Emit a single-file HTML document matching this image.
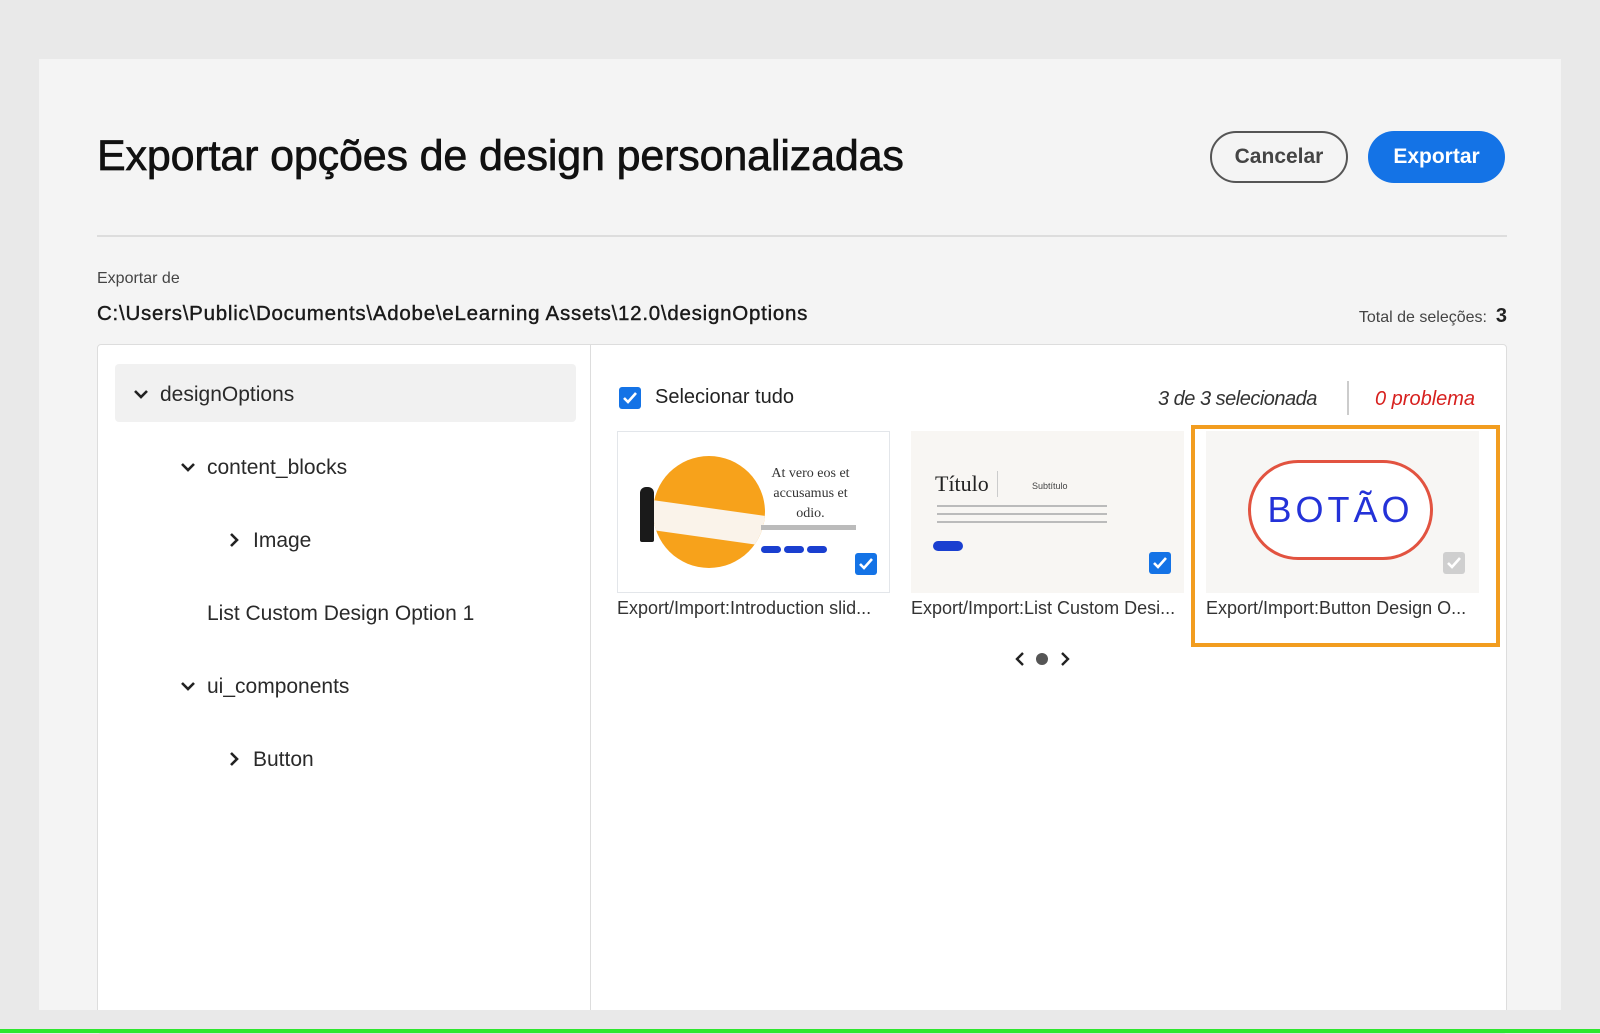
<!DOCTYPE html>
<html><head><meta charset="utf-8"><style>
*{margin:0;padding:0;box-sizing:border-box}
body{width:1600px;height:1033px;background:#e9e9e9;font-family:"Liberation Sans",sans-serif;position:relative;overflow:hidden;color:#222}
.abs{position:absolute}
#dlg{left:39px;top:59px;width:1522px;height:951px;background:#f4f4f4}
.green{left:0;top:1029px;width:1600px;height:4px;background:#2ee62e}
.btn{height:52px;border-radius:26px;font-size:21px;font-weight:bold;display:flex;align-items:center;justify-content:center}
.tree{font-size:21px;color:#2a2a2a}
.lbl{font-size:18px;color:#333;white-space:nowrap}
.cb{width:22px;height:22px;border-radius:3px;background:#1473e6}
.cb svg{display:block}
</style></head><body>
<div id="dlg" class="abs"></div>
<div class="abs" style="left:97px;top:132px;font-size:43px;letter-spacing:-0.15px;color:#111;-webkit-text-stroke:0.7px #111">Exportar opções de design personalizadas</div>
<div class="abs btn" style="left:1210px;top:131px;width:138px;border:2.5px solid #555;color:#444">Cancelar</div>
<div class="abs btn" style="left:1368px;top:131px;width:137px;background:#1473e6;color:#fff">Exportar</div>
<div class="abs" style="left:97px;top:235px;width:1410px;height:2px;background:#ddd"></div>
<div class="abs" style="left:97px;top:270px;font-size:16px;color:#444">Exportar de</div>
<div class="abs" style="left:97px;top:302px;font-size:20.5px;color:#1a1a1a;letter-spacing:0.75px;-webkit-text-stroke:0.4px #1a1a1a">C:\Users\Public\Documents\Adobe\eLearning Assets\12.0\designOptions</div>
<div class="abs" style="left:1340px;top:305px;font-size:16px;color:#444;width:167px;text-align:right">Total de seleções:&nbsp; <b style="font-size:20px;color:#222">3</b></div>
<div class="abs" style="left:97px;top:344px;width:1410px;height:690px;background:#fff;border:1px solid #ddd;border-radius:4px"></div>
<div class="abs" style="left:590px;top:344px;width:1px;height:690px;background:#ddd"></div>
<div class="abs" style="left:115px;top:364px;width:461px;height:58px;background:#f1f1f1;border-radius:4px"></div>
<svg class="abs" style="left:133px;top:388px" width="16" height="12"><path d="M2 3l6 6 6-6" stroke="#222" stroke-width="2.6" fill="none"/></svg>
<div class="abs tree" style="left:160px;top:383px">designOptions</div>
<svg class="abs" style="left:180px;top:461px" width="16" height="12"><path d="M2 3l6 6 6-6" stroke="#222" stroke-width="2.6" fill="none"/></svg>
<div class="abs tree" style="left:207px;top:456px">content_blocks</div>
<svg class="abs" style="left:228px;top:532px" width="12" height="16"><path d="M3 2l6 6-6 6" stroke="#222" stroke-width="2.6" fill="none"/></svg>
<div class="abs tree" style="left:253px;top:529px">Image</div>
<div class="abs tree" style="left:207px;top:602px">List Custom Design Option 1</div>
<svg class="abs" style="left:180px;top:680px" width="16" height="12"><path d="M2 3l6 6 6-6" stroke="#222" stroke-width="2.6" fill="none"/></svg>
<div class="abs tree" style="left:207px;top:675px">ui_components</div>
<svg class="abs" style="left:228px;top:751px" width="12" height="16"><path d="M3 2l6 6-6 6" stroke="#222" stroke-width="2.6" fill="none"/></svg>
<div class="abs tree" style="left:253px;top:748px">Button</div>

<div class="abs cb" style="left:619px;top:387px"><svg width="22" height="22"><path d="M5 11l4 4 8-9" stroke="#fff" stroke-width="2.6" fill="none"/></svg></div>
<div class="abs" style="left:655px;top:386px;font-size:20px;color:#222">Selecionar tudo</div>
<div class="abs" style="left:1158px;top:388px;font-size:20px;font-style:italic;color:#333;letter-spacing:-0.5px">3 de 3 selecionada</div>
<div class="abs" style="left:1347px;top:381px;width:2px;height:34px;background:#ccc"></div>
<div class="abs" style="left:1375px;top:388px;font-size:20px;font-style:italic;color:#d7201e">0 problema</div>

<div class="abs" style="left:617px;top:431px;width:273px;height:162px;background:#fff;border:1px solid #e3e6ea;overflow:hidden">
 <div class="abs" style="left:35px;top:24px;width:112px;height:112px;border-radius:50%;background:#f7a21b;overflow:hidden">
  <div class="abs" style="left:0;top:52px;width:112px;height:30px;background:#faf3ea;transform:skewY(8deg)"></div>
 </div>
 <div class="abs" style="left:22px;top:55px;width:14px;height:55px;background:#1a1a1a;border-radius:6px 6px 2px 2px"></div>
 <div class="abs" style="left:145px;top:32px;width:95px;font-family:'Liberation Serif',serif;font-size:14px;line-height:20px;text-align:center;color:#333">At vero eos et accusamus et odio.</div>
 <div class="abs" style="left:143px;top:93px;width:95px;height:5px;background:#bbb"></div>
 <div class="abs" style="left:143px;top:114px;width:20px;height:7px;border-radius:4px;background:#1a3fd0"></div>
 <div class="abs" style="left:166px;top:114px;width:20px;height:7px;border-radius:4px;background:#1a3fd0"></div>
 <div class="abs" style="left:189px;top:114px;width:20px;height:7px;border-radius:4px;background:#1a3fd0"></div>
 <div class="abs cb" style="left:237px;top:121px"><svg width="22" height="22"><path d="M5 11l4 4 8-9" stroke="#fff" stroke-width="2.6" fill="none"/></svg></div>
</div>
<div class="abs" style="left:911px;top:431px;width:273px;height:162px;background:#f8f6f3;overflow:hidden">
 <div class="abs" style="left:24px;top:40px;font-family:'Liberation Serif',serif;font-size:22px;color:#222">Título</div>
 <div class="abs" style="left:86px;top:40px;width:1px;height:26px;background:#ccc"></div>
 <div class="abs" style="left:121px;top:50px;font-size:9px;color:#444">Subtítulo</div>
 <div class="abs" style="left:26px;top:74px;width:170px;height:2px;background:#bbb"></div>
 <div class="abs" style="left:26px;top:82px;width:170px;height:2px;background:#bbb"></div>
 <div class="abs" style="left:26px;top:90px;width:170px;height:2px;background:#bbb"></div>
 <div class="abs" style="left:22px;top:110px;width:30px;height:10px;border-radius:5px;background:#1a3fd0"></div>
 <div class="abs cb" style="left:238px;top:121px"><svg width="22" height="22"><path d="M5 11l4 4 8-9" stroke="#fff" stroke-width="2.6" fill="none"/></svg></div>
</div>
<div class="abs" style="left:1191px;top:425px;width:309px;height:222px;border:4px solid #f29d1f"></div>
<div class="abs" style="left:1206px;top:431px;width:273px;height:162px;background:#f7f6f4;overflow:hidden">
 <div class="abs" style="left:42px;top:29px;width:185px;height:100px;border-radius:50px;background:#fff;border:3px solid #e25340;display:flex;align-items:center;justify-content:center;font-size:36px;letter-spacing:4px;color:#2432d8">BOTÃO</div>
 <div class="abs" style="left:237px;top:121px;width:22px;height:22px;border-radius:3px;background:#cfcfcf"><svg width="22" height="22"><path d="M5 11l4 4 8-9" stroke="#fff" stroke-width="2.6" fill="none"/></svg></div>
</div>
<div class="abs lbl" style="left:617px;top:598px">Export/Import:Introduction slid...</div>
<div class="abs lbl" style="left:911px;top:598px">Export/Import:List Custom Desi...</div>
<div class="abs lbl" style="left:1206px;top:598px">Export/Import:Button Design O...</div>
<svg class="abs" style="left:1011px;top:650px" width="64" height="18"><path d="M12 3l-6 6 6 6" stroke="#222" stroke-width="2.4" fill="none"/><circle cx="31" cy="9" r="6" fill="#555"/><path d="M51 3l6 6-6 6" stroke="#222" stroke-width="2.4" fill="none"/></svg>
<div class="abs" style="left:0;top:1010px;width:1600px;height:19px;background:#e9e9e9"></div>
<div class="abs green"></div>
</body></html>
